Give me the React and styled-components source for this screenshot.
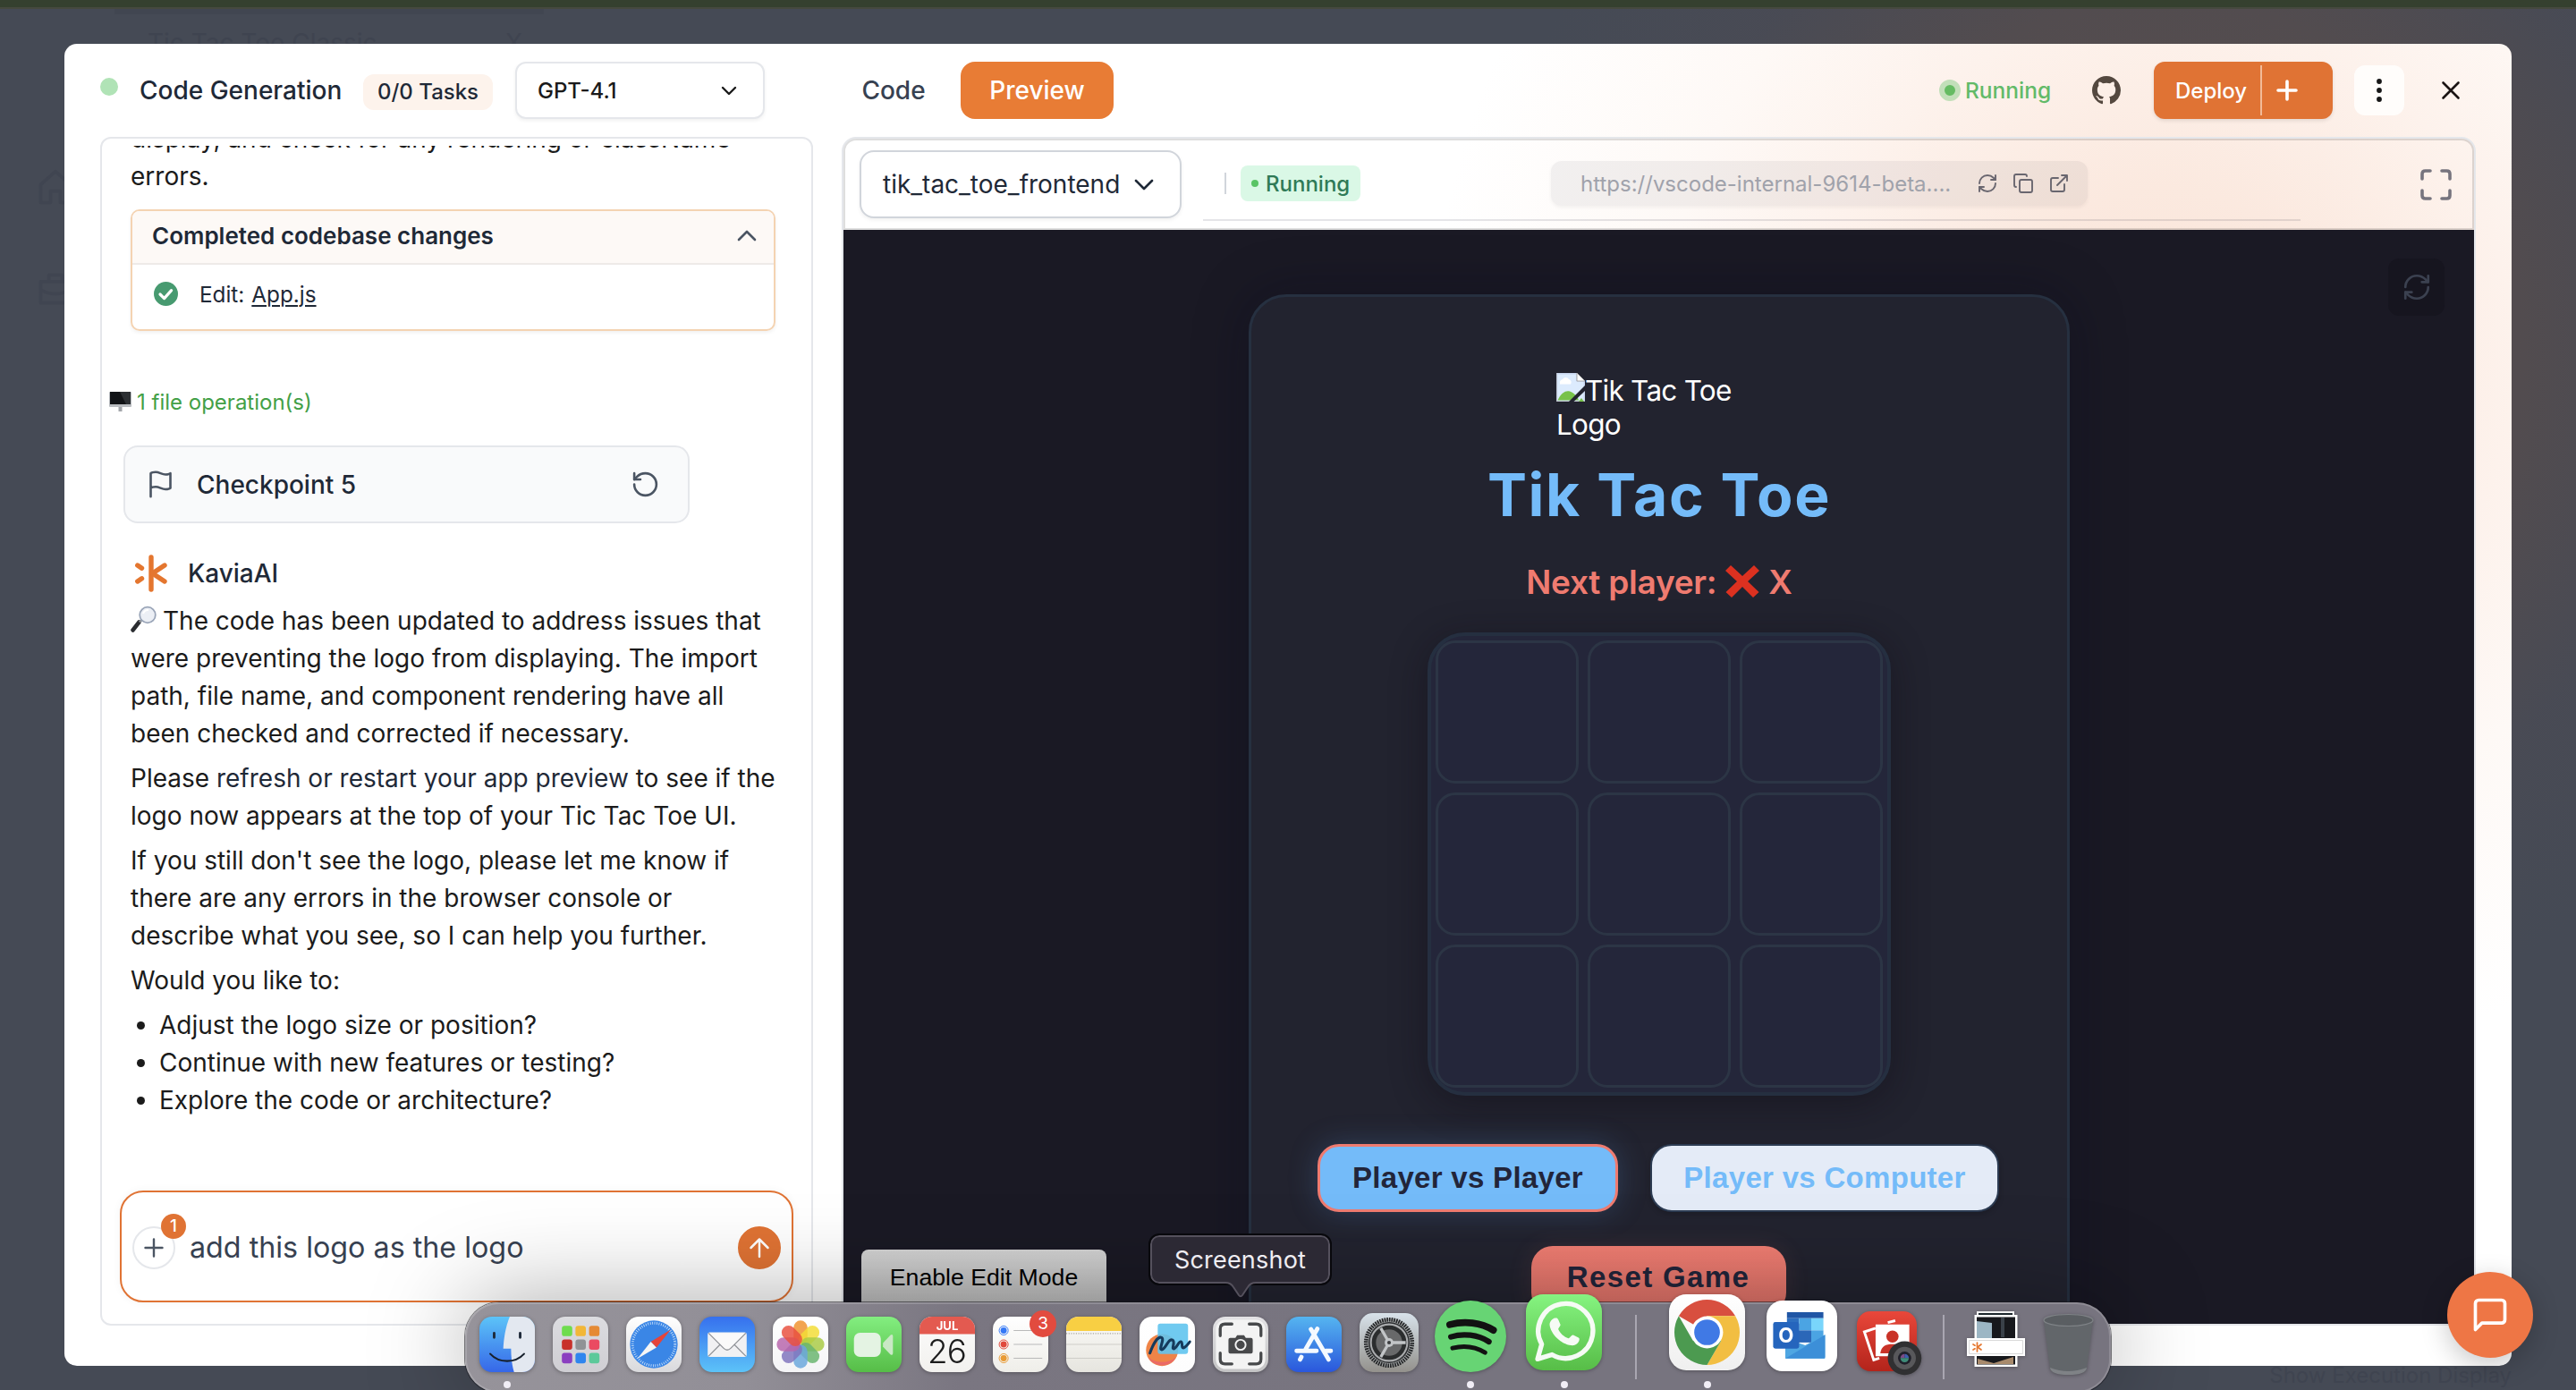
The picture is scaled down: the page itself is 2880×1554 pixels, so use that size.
import React from "react";
import styled, { createGlobalStyle } from "styled-components";

const SANS = `Inter, "Liberation Sans", sans-serif`;
const ARIAL = `"Liberation Sans", Arial, sans-serif`;

const GlobalStyle = createGlobalStyle`
  *, *::before, *::after { box-sizing: border-box; }
  body { margin: 0; background: #454a55; }
  svg { display: block; flex: none; }
`;

const Page = styled.div`
  position: relative;
  width: 2880px;
  height: 1554px;
  overflow: hidden;
  padding: 49px 72px 0;
  font-family: ${SANS};
  white-space: nowrap;
  background:
    linear-gradient(#35402f 0 8px, #46493f 8px 10px, transparent 10px),
    radial-gradient(circle 780px at 2420px 400px, #5c4e4c 0, #524c4f 400px, rgba(75, 75, 84, 0.6) 580px, rgba(69, 74, 85, 0) 780px),
    #454a55;
`;

/* ---------- dimmed page behind the dialog ---------- */

const GhostTab = styled.div`
  position: absolute;
  left: 128px;
  top: 10px;
  width: 480px;
  height: 39px;
  padding: 15px 24px 0 37px;
  display: flex;
  justify-content: space-between;
  border-top: 6px solid #414651;
  font-size: 28px;
  line-height: 34px;
  color: #3f4450;
`;

const GhostNav = styled.div`
  position: absolute;
  left: 40px;
  top: 188px;
  display: flex;
  flex-direction: column;
  gap: 70px;
  color: #404551;
`;

const GhostCaption = styled.div`
  position: absolute;
  right: 72px;
  top: 1521px;
  font-size: 24px;
  line-height: 34px;
  color: #3f4450;
`;

/* ---------- dialog ---------- */

const Dialog = styled.main`
  position: relative;
  width: 2736px;
  height: 1478px;
  padding: 0 40px;
  border-radius: 14px;
  background:
    radial-gradient(circle 820px at 2348px 351px, #fae4d8 0, #fbe9df 190px, #fdf2ec 390px, #fef9f6 560px, rgba(255, 255, 255, 0) 820px),
    #ffffff;
`;

const Header = styled.header`
  display: flex;
  align-items: center;
  height: 104px;
`;

const StatusDot = styled.span`
  width: 20px;
  height: 20px;
  margin-bottom: 8px;
  border-radius: 50%;
  background: #b0e3b6;
`;

const Title = styled.h1`
  width: 250px;
  margin: 0 0 0 24px;
  font-size: 28px;
  font-weight: 500;
  color: #1f2937;
`;

const TaskPill = styled.span`
  display: flex;
  align-items: center;
  justify-content: center;
  width: 145px;
  height: 40px;
  margin-top: 3px;
  border-radius: 12px;
  background: #fdf3ec;
  font-size: 24px;
  font-weight: 500;
  color: #1f2937;
`;

const ModelSelect = styled.div`
  display: flex;
  align-items: center;
  justify-content: space-between;
  width: 279px;
  height: 64px;
  margin-left: 25px;
  padding: 0 29px 0 23px;
  border: 2px solid #e5e7eb;
  border-radius: 12px;
  background: #fff;
  box-shadow: 0 2px 4px rgba(0, 0, 0, 0.06);
  font-size: 24px;
  color: #1a1a1a;
  font-weight: 500;
`;

const Tab = styled.span`
  display: flex;
  align-items: center;
  justify-content: center;
  width: ${(p) => p.$width}px;
  height: 64px;
  margin-left: ${(p) => p.$before}px;
  border-radius: 16px;
  background: ${(p) => (p.$active ? "#e87c35" : "transparent")};
  color: ${(p) => (p.$active ? "#fff" : "#374151")};
  font-size: 28px;
  font-weight: 500;
`;

const HeaderEnd = styled.div`
  display: flex;
  align-items: center;
  margin-left: auto;
  margin-right: 17px;
`;

const LiveDot = styled.span`
  width: 24px;
  height: 24px;
  border: 6px solid #c2dfb9;
  border-radius: 50%;
  background: #65bb62;
`;

const LiveText = styled.span`
  width: 142px;
  margin-left: 5px;
  font-size: 24.5px;
  font-weight: 500;
  color: #62ba68;
`;

const DeployButton = styled.div`
  display: flex;
  align-items: center;
  width: 200px;
  height: 64px;
  margin-left: 37px;
  padding: 0 39px 0 24px;
  border-radius: 12px;
  background: #e07334;
  box-shadow: 0 2px 4px rgba(0, 0, 0, 0.1);
  color: #fff;
  font-size: 24px;
  font-weight: 500;
`;

const DeployDivider = styled.span`
  width: 2px;
  height: 56px;
  margin: 0 16px 0 auto;
  background: #f1bb99;
`;

const MenuButton = styled.div`
  display: flex;
  align-items: center;
  justify-content: center;
  width: 56px;
  height: 56px;
  margin: 0 41px 0 24px;
  border-radius: 12px;
  background: #fffdfb;
`;

const Body = styled.div`
  display: flex;
  gap: 32px;
`;

/* ---------- chat ---------- */

const ChatPanel = styled.section`
  display: flex;
  flex-direction: column;
  width: 797px;
  height: 1329px;
  padding: 8px 0 24px;
  border: 2px solid #e5e7eb;
  border-radius: 12px;
`;

const ChatScroll = styled.div`
  flex: 1;
  min-height: 0;
  padding-left: 32px;
  overflow: hidden;
`;

const Message = styled.p`
  margin: ${(p) => p.$top || 0}px 0 0;
  font-size: 28px;
  line-height: 42px;
  color: #1b1b1b;
`;

const Emphasis = styled.span`
  color: #1f2937;
`;

const Bullets = styled.ul`
  margin: 8px 0 0;
  padding: 0;
  list-style: none;
  font-size: 28px;
  line-height: 42px;
  color: #1b1b1b;
`;

const Bullet = styled.li`
  display: flex;
  align-items: center;
  gap: 16px;
  padding-left: 7px;

  &::before {
    content: "";
    width: 9px;
    height: 9px;
    border-radius: 50%;
    background: #1b1b1b;
  }
`;

const InlineIcon = styled.span`
  display: inline-block;
  vertical-align: ${(p) => p.$drop}px;
  margin-right: ${(p) => p.$after}px;
`;

const ChangeCard = styled.div`
  width: 721px;
  height: 136px;
  margin-top: 16px;
  border: 2px solid #f4d3b2;
  border-radius: 10px;
  overflow: hidden;
  box-shadow: 0 2px 4px rgba(0, 0, 0, 0.06);
`;

const ChangeHead = styled.div`
  display: flex;
  align-items: center;
  justify-content: space-between;
  height: 60px;
  padding: 0 19px 3px 22px;
  border-bottom: 2px solid #eeeae8;
  background: #fdf9f6;
  font-size: 26px;
  font-weight: 600;
  color: #1f2937;
`;

const ChangeRow = styled.div`
  display: flex;
  align-items: center;
  height: 65px;
  padding-left: 24px;
  font-size: 24.300px;
  color: #1f2937;

  svg { margin-right: 24px; }
`;

const FileLink = styled.span`
  margin-left: 8px;
  text-decoration: underline;
  text-decoration-thickness: 2px;
  text-underline-offset: 3px;
`;

const FileOps = styled.div`
  display: flex;
  align-items: center;
  gap: 6px;
  height: 40px;
  margin: 59px 0 0 -24px;
  font-size: 24px;
  color: #43a047;
`;

const Checkpoint = styled.div`
  display: flex;
  align-items: center;
  width: 633px;
  height: 87px;
  margin: 29px 0 0 -8px;
  padding: 0 31px 0 23px;
  border: 2px solid #e5e7eb;
  border-radius: 16px;
  background: #f9fafb;
  font-size: 28px;
  font-weight: 500;
  color: #1f2937;
`;

const CheckpointName = styled.span`
  flex: 1;
  margin-left: 24px;
`;

const Author = styled.div`
  display: flex;
  align-items: center;
  gap: 20px;
  height: 48px;
  margin: 32px 0 8px 2px;
  font-size: 28px;
  font-weight: 500;
  color: #1f2937;
`;

const Composer = styled.div`
  display: flex;
  align-items: center;
  width: 753px;
  height: 125px;
  margin-left: 20px;
  padding: 2px 12px 0;
  border: 2px solid #e07334;
  border-radius: 26px;
  background: #fff;
  box-shadow: 0 0 10px rgba(0, 0, 0, 0.05);
`;

const RoundButton = styled.div`
  position: relative;
  display: flex;
  align-items: center;
  justify-content: center;
  width: 48px;
  height: 48px;
  border-radius: 50%;
  border: 2px solid ${(p) => (p.$solid ? "#e07334" : "#e5e7eb")};
  background: ${(p) => (p.$solid ? "#e07334" : "#fff")};
`;

const CountBadge = styled.span`
  position: absolute;
  right: -14px;
  top: -16px;
  width: 28px;
  height: 28px;
  border-radius: 50%;
  background: #e07334;
  color: #fff;
  font-size: 19px;
  font-weight: 500;
  line-height: 28px;
  text-align: center;
`;

const ComposerText = styled.span`
  flex: 1;
  margin-left: 16px;
  font-size: 32.250px;
  color: #374151;
`;

/* ---------- preview ---------- */

const PreviewPanel = styled.section`
  width: 1827px;
  height: 1329px;
  border: 2px solid #e5e7eb;
  border-radius: 16px 16px 0 0;
`;

const Toolbar = styled.div`
  display: flex;
  align-items: center;
  height: 102px;
  padding: 0 23px 0 16px;
  border: 2px solid rgba(0, 0, 0, 0.13);
  border-radius: 14px 14px 0 0;
`;

const AppSelect = styled.div`
  display: flex;
  align-items: center;
  justify-content: space-between;
  width: 360px;
  height: 76px;
  padding: 0 29px 0 24px;
  border: 2px solid #d1d5db;
  border-radius: 16px;
  background: #fff;
  box-shadow: 0 2px 4px rgba(0, 0, 0, 0.06);
  font-size: 28px;
  color: #1f2937;
`;

const AddressRow = styled.div`
  display: flex;
  align-items: center;
  width: 1227px;
  height: 82px;
  margin: 0 0 0 24px;
  padding-left: 24px;
  border-bottom: 2px solid rgba(20, 20, 50, 0.11);
`;

const ThinDivider = styled.span`
  width: 2px;
  height: 24px;
  background: #d1d5db;
`;

const RunningPill = styled.span`
  display: flex;
  align-items: center;
  gap: 8px;
  width: 134px;
  height: 40px;
  margin-left: 16px;
  padding-left: 12px;
  border-radius: 8px;
  background: #daf8e6;
  font-size: 24px;
  font-weight: 500;
  color: #2f7a57;

  &::before {
    content: "";
    width: 8px;
    height: 8px;
    border-radius: 50%;
    background: #5ac466;
  }
`;

const AddressBox = styled.div`
  display: flex;
  align-items: center;
  gap: 16px;
  width: 600px;
  height: 50px;
  margin-left: 213px;
  padding-left: 33px;
  border-radius: 12px;
  background: rgba(40, 30, 50, 0.06);
  box-shadow: 0 2px 4px rgba(0, 0, 0, 0.05);
  color: #69666f;
`;

const Address = styled.span`
  width: 427px;
  font-size: 24px;
  color: #a0a2ab;
`;

const FullScreen = styled.div`
  margin-left: auto;
  color: #76747e;
`;

const Frame = styled.div`
  position: relative;
  height: 1223px;
  padding: 72px 0 0 453px;
  overflow: hidden;
  background: #1a1924;
`;

const ReloadGhost = styled.div`
  position: absolute;
  right: 33px;
  top: 32px;
  display: flex;
  align-items: center;
  justify-content: center;
  width: 63px;
  height: 64px;
  border-radius: 12px;
  background: #16151f;
  color: #3b4150;
`;

const EditMode = styled.div`
  position: absolute;
  left: 20px;
  bottom: 6px;
  width: 274px;
  height: 77px;
  padding-top: 15px;
  border-radius: 8px;
  background: linear-gradient(#d2d2d2, #bcbcbc 80%);
  font-family: ${ARIAL};
  font-size: 26.67px;
  line-height: 32px;
  text-align: center;
  color: #000;
`;

const GameCard = styled.div`
  display: flex;
  flex-direction: column;
  align-items: center;
  width: 918px;
  height: 1300px;
  padding-top: 85px;
  border: 3px solid #263040;
  border-radius: 42px;
  background: #22232f;
  box-shadow: 0 0 60px rgba(10, 10, 30, 0.35);
`;

const BrokenImage = styled.div`
  width: 230px;
  height: 76px;
  font-size: 31.500px;
  line-height: 38px;
  letter-spacing: -0.750px;
  color: #fff;
`;

const GameTitle = styled.h2`
  margin: 20px 0 0;
  font-size: 66px;
  font-weight: 700;
  line-height: 80px;
  letter-spacing: 1.600px;
  color: #74bbf9;
`;

const Status = styled.div`
  display: flex;
  align-items: center;
  height: 46px;
  margin-top: 34px;
  font-size: 37px;
  font-weight: 600;
  letter-spacing: -0.250px;
  color: #ef7b70;

  svg { margin: 0 10px; }
`;

const Board = styled.div`
  display: grid;
  grid-template-columns: repeat(3, 160px);
  grid-auto-rows: 160px;
  gap: 10px;
  width: 518px;
  height: 518px;
  margin-top: 34px;
  padding: 5px;
  border: 4px solid #252f40;
  border-radius: 42px;
  background: #24263a;
  box-shadow: 0 8px 40px rgba(15, 10, 20, 0.45);
`;

const Cell = styled.div`
  border: 3px solid #2c3545;
  border-radius: 22px;
`;

const Modes = styled.div`
  display: flex;
  gap: 36px;
  margin-top: 54px;
  margin-right: 2px;
`;

const ModeButton = styled.div`
  display: flex;
  align-items: center;
  justify-content: center;
  width: ${(p) => (p.$active ? 336 : 390)}px;
  height: 76px;
  border: ${(p) => (p.$active ? "3px solid #ef7b70" : "2px solid #2c3b52")};
  border-radius: 24px;
  background: ${(p) => (p.$active ? "#74bbf9" : "#e4ebf7")};
  box-shadow: ${(p) => (p.$active ? "0 0 32px rgba(80, 130, 190, 0.3)" : "0 2px 6px rgba(0, 0, 0, 0.2)")};
  font-family: ${ARIAL};
  font-size: 33px;
  font-weight: 700;
  letter-spacing: 0.3px;
  color: ${(p) => (p.$active ? "#22253a" : "#74bbf9")};
`;

const ResetButton = styled.div`
  display: flex;
  align-items: center;
  justify-content: center;
  width: 285px;
  height: 76px;
  margin: 38px 2px 0 0;
  padding-bottom: 6px;
  border-radius: 24px;
  background: linear-gradient(#f07d72 0%, #e2746a 85%);
  box-shadow: 0 2px 28px rgba(239, 123, 112, 0.12);
  font-family: ${ARIAL};
  font-size: 33px;
  font-weight: 700;
  letter-spacing: 1.35px;
  color: #22253a;
`;

/* ---------- overlays ---------- */

const Tooltip = styled.div`
  position: absolute;
  left: 1286px;
  top: 1381px;
  width: 201px;
  height: 54px;
  border: 2px solid #55515d;
  border-radius: 10px;
  outline: 2px solid #08080c;
  background: #2c2934;
  font-size: 27px;
  line-height: 51px;
  text-align: center;
  letter-spacing: 0.2px;
  color: #efedf2;

  svg {
    position: absolute;
    left: 82px;
    top: 48px;
  }
`;

const Dock = styled.nav`
  position: absolute;
  left: 520px;
  top: 1456px;
  display: flex;
  align-items: flex-end;
  width: 1840px;
  height: 101px;
  padding: 0 16px 23px;
  border-radius: 38px;
  background: linear-gradient(90deg, #96939a 0%, #928f97 17%, #7a7681 30%, #77747f 60%, #77747f 100%);
  box-shadow: 0 0 0 1px rgba(20, 20, 25, 0.55), inset 0 0 0 2px rgba(255, 255, 255, 0.17), 0 0 110px rgba(0, 0, 0, 0.36);
`;

const DockItem = styled.div`
  position: relative;
  flex: none;
  width: ${(p) => p.$size}px;
  height: ${(p) => p.$height || p.$size}px;
  margin-left: ${(p) => (p.$before === undefined ? 20 : p.$before)}px;
  margin-bottom: ${(p) => p.$lift || 0}px;

  > svg {
    width: 100%;
    height: 100%;
    overflow: visible;
    filter: drop-shadow(0 1px 2px rgba(0, 0, 0, 0.3));
  }
`;

const RunningMark = styled.span`
  position: absolute;
  left: 50%;
  bottom: ${(p) => -18 - (p.$lift || 0)}px;
  width: 8px;
  height: 8px;
  margin-left: -4px;
  border-radius: 50%;
  background: #f1eef6;
`;

const DockBadge = styled.span`
  position: absolute;
  right: -9px;
  top: -7px;
  width: 30px;
  height: 30px;
  border-radius: 50%;
  background: #e24b3f;
  color: #fff;
  font-size: 19px;
  line-height: 30px;
  text-align: center;
`;

const DockDivider = styled.span`
  width: 2px;
  height: 72px;
  margin: 0 ${(p) => p.$after}px -8px ${(p) => p.$before}px;
  background: #a9a6b1;
`;

const ChatFab = styled.div`
  position: absolute;
  left: 2736px;
  top: 1422px;
  display: flex;
  align-items: center;
  justify-content: center;
  width: 96px;
  height: 96px;
  border-radius: 50%;
  background: #ee7645;
  box-shadow: 0 8px 30px rgba(0, 0, 0, 0.22);
`;

/* ---------- line icons ---------- */

const Line = ({ size, w = size, h = size, box = "0 0 24 24", sw = 2, color = "currentColor", children }) => (
  <svg width={w} height={h} viewBox={box} fill="none" stroke={color} strokeWidth={sw} strokeLinecap="round" strokeLinejoin="round">
    {children}
  </svg>
);

const Refresh = ({ size, sw }) => (
  <Line size={size} sw={sw}>
    <path d="M3 12a9 9 0 0 1 9-9 9.75 9.75 0 0 1 6.74 2.74L21 8" />
    <path d="M21 3v5h-5" />
    <path d="M21 12a9 9 0 0 1-9 9 9.75 9.75 0 0 1-6.74-2.74L3 16" />
    <path d="M8 16H3v5" />
  </Line>
);

const CheckCircle = () => (
  <svg width="27" height="27" viewBox="0 0 27 27">
    <circle cx="13.5" cy="13.5" r="13.5" fill="#479a70" />
    <path d="M7 14l4.6 4.6 8-9" fill="none" stroke="#fff" strokeWidth="3.2" strokeLinecap="round" strokeLinejoin="round" />
  </svg>
);

const GitHubMark = () => (
  <svg width="32" height="32" viewBox="0 0 16 16" fill="#54483f">
    <path d="M8 0C3.58 0 0 3.58 0 8c0 3.54 2.29 6.53 5.47 7.59.4.07.55-.17.55-.38 0-.19-.01-.82-.01-1.49-2.01.37-2.53-.49-2.69-.94-.09-.23-.48-.94-.82-1.13-.28-.15-.68-.52-.01-.53.63-.01 1.08.58 1.23.82.72 1.21 1.87.87 2.33.66.07-.52.28-.87.51-1.07-1.78-.2-3.64-.89-3.64-3.95 0-.87.31-1.59.82-2.15-.08-.2-.36-1.02.08-2.12 0 0 .67-.21 2.2.82.64-.18 1.32-.27 2-.27s1.36.09 2 .27c1.53-1.04 2.2-.82 2.2-.82.44 1.1.16 1.92.08 2.12.51.56.82 1.27.82 2.15 0 3.07-1.87 3.75-3.65 3.95.29.25.54.73.54 1.48 0 1.07-.01 1.93-.01 2.2 0 .21.15.46.55.38A8.01 8.01 0 0 0 16 8c0-4.42-3.58-8-8-8z" />
  </svg>
);

const KaviaMark = ({ size = 42 }) => (
  <svg width={size} height={size} viewBox="0 0 42 42" fill="none" stroke="#e4762f" strokeWidth="5.4" strokeLinecap="round">
    <path d="M21 3v36" />
    <path d="M36 12L22.500 21L36 30" strokeLinejoin="round" />
    <path d="M5.800 12l4.700 3.200M5.800 30l4.700-3.200" />
  </svg>
);

const Monitor = () => (
  <svg width="25" height="22" viewBox="0 0 25 22">
    <rect x="0" y="0" width="25" height="17" rx="1" fill="#b9bcc0" />
    <rect x="1" y="0" width="23" height="14" fill="#111316" />
    <path d="M12 0h12v14h-5z" fill="#2c2f32" />
    <path d="M10.500 17h4v5h-4z" fill="#a3a6aa" />
  </svg>
);

const Magnifier = () => (
  <svg width="30" height="30" viewBox="0 0 30 30">
    <path d="M2.500 27.500l7-9" stroke="#2a2c30" strokeWidth="4.500" strokeLinecap="round" />
    <path d="M10 18.500l3-3" stroke="#8c9096" strokeWidth="3" />
    <circle cx="19" cy="10.500" r="8.800" fill="#eceff5" stroke="#9aa5b8" strokeWidth="1.800" />
    <path d="M14 9a6 6 0 0 1 6-4" stroke="#fff" strokeWidth="2" fill="none" />
  </svg>
);

const Cross = () => (
  <svg width="38" height="38" viewBox="0 0 38 38">
    <path d="M6 1l13 12L32 1l6 6-13 12 12.500 12L31 37 19 25 7 37l-6.500-6L13 19 0 7z" fill="#dc3120" />
  </svg>
);

const BrokenPicture = () => (
  <svg width="32" height="32" viewBox="0 0 32 32">
    <path d="M0 0h23l9 9v23H0z" fill="#c9d6ee" />
    <path d="M1.500 1.500H22v8h8.500v21h-29z" fill="#dcebfd" />
    <path d="M23 0l9 9h-9z" fill="#fff" stroke="#a8a8a8" />
    <path d="M4 12a4 4 0 0 1 3-5 4 4 0 0 1 7 0 3.500 3.500 0 0 1 2 5.500H4z" fill="#fff" />
    <path d="M1.500 30.500C5 22 11 19 15 20.500c5 2 9 6 10 10z" fill="#78c24b" />
    <path d="M0 0v32h32" fill="none" stroke="#b0b0b0" />
    <path d="M32 14v6L19.500 32H14z" fill="#22232f" />
    <path d="M25 32l3-4 3 4z" fill="#78c24b" />
  </svg>
);

/* ---------- dock icons ---------- */

const Tile = ({ id, from, to, children }) => (
  <svg viewBox="0 0 64 64">
    <defs>
      <linearGradient id={id} x1="0" y1="0" x2="0" y2="1">
        <stop offset="0" stopColor={from} />
        <stop offset="1" stopColor={to} />
      </linearGradient>
      <clipPath id={`${id}-clip`}>
        <rect width="64" height="64" rx="14.500" />
      </clipPath>
    </defs>
    <rect width="64" height="64" rx="14.500" fill={`url(#${id})`} />
    {children}
  </svg>
);

const Finder = () => (
  <Tile id="finder" from="#5cc4f8" to="#3667e8">
    <path clipPath="url(#finder-clip)" d="M35 0C30 12 28 26 27.500 37h9c0 10 1 19 3.500 27h24V0z" fill="#e3e8f0" />
    <path d="M17 19v5M47 19v5" stroke="#1f2a3a" strokeWidth="3" strokeLinecap="round" />
    <path d="M12.500 43c10 11 29 11 39 0" fill="none" stroke="#17202c" strokeWidth="2.200" strokeLinecap="round" />
  </Tile>
);

const launchColors = ["#6fdc4e", "#f2b738", "#e58a35", "#c8302a", "#909396", "#ea4a62", "#8b3fc0", "#2f85ee", "#5cc99a"];
const Launchpad = () => (
  <Tile id="launch" from="#dcdce0" to="#cfced3">
    {launchColors.map((c, i) => (
      <rect key={c} x={10.500 + (i % 3) * 15.700} y={10.500 + Math.floor(i / 3) * 15.700} width="12" height="12" rx="3" fill={c} />
    ))}
  </Tile>
);

const Safari = () => (
  <Tile id="safari" from="#ffffff" to="#d9d9dc">
    <circle cx="32" cy="32" r="27.500" fill="#3a86e6" />
    <circle cx="32" cy="32" r="24.500" fill="none" stroke="#d5e8fb" strokeWidth="3" strokeDasharray="0.800 1.765" />
    <path d="M51.500 15L28.500 29l6.500 6.500z" fill="#e5443a" />
    <path d="M13 48.500L28.500 29l6.500 6.500z" fill="#f5f5f5" />
  </Tile>
);

const Mail = () => (
  <Tile id="mail" from="#3670ee" to="#5cc3f8">
    <rect x="9.500" y="18" width="45" height="28.500" rx="2.500" fill="#f1f1f3" />
    <path d="M10.500 45.500L25 31M53.500 45.500L39 31" stroke="#8f9297" strokeWidth="1.300" />
    <path d="M10.500 19L28 36.500c2.500 2.500 5.500 2.500 8 0L53.500 19" fill="#fafafa" stroke="#8f9297" strokeWidth="1.300" />
  </Tile>
);

const petals = ["#f0922f", "#f3dd36", "#a9cb45", "#69b56f", "#6aa7dc", "#8073bd", "#b765ab", "#e8503f"];
const Photos = () => (
  <Tile id="photos" from="#ffffff" to="#f4f4f6">
    {petals.map((c, i) => (
      <rect key={c} x="24" y="4.500" width="16" height="27" rx="8" fill={c} opacity="0.84" transform={`rotate(${i * 45} 32 32)`} />
    ))}
  </Tile>
);

const FaceTime = () => (
  <Tile id="facetime" from="#83ee80" to="#56bd47">
    <rect x="9" y="18.500" width="31" height="28" rx="7" fill="#e4f3e3" />
    <path d="M42.500 30.500L51 21.500q3-2 3 1.500v19q0 3.500-3 1.500l-8.500-9z" fill="#c9e8c5" />
  </Tile>
);

const Calendar = () => (
  <Tile id="calendar" from="#fcfcfc" to="#f2f1ee">
    <path clipPath="url(#calendar-clip)" d="M0 0h64v20H0z" fill="#e35a50" />
    <text x="32" y="15.500" textAnchor="middle" fontFamily={SANS} fontSize="13.500" fontWeight="700" fill="#fff">JUL</text>
    <text x="31.500" y="54" textAnchor="middle" fontFamily={SANS} fontSize="38" fontWeight="300" letterSpacing="-1" fill="#1c1c1c">26</text>
  </Tile>
);

const Reminders = () => (
  <Tile id="reminders" from="#ffffff" to="#efeee9">
    {["#3478f6", "#e0483c", "#e89a34"].map((c, i) => (
      <g key={c} transform={`translate(0 ${i * 16})`}>
        <circle cx="12.500" cy="16" r="3.600" fill={c} />
        <circle cx="12.500" cy="16" r="5.200" fill="none" stroke={c} strokeWidth="1" />
        <path d="M24 16h33" stroke="#b9b9b9" strokeWidth="1.200" />
      </g>
    ))}
  </Tile>
);

const Notes = () => (
  <Tile id="notes" from="#fbfaf7" to="#e6e5df">
    <path clipPath="url(#notes-clip)" d="M0 0h64v16.500H0z" fill="#f8cf43" />
    <path d="M0 19.500h64" stroke="#a5a39c" strokeWidth="1.500" strokeDasharray="1.200 1.600" />
    <path d="M0 32h64M0 48h64" stroke="#cfcec9" strokeWidth="1.200" />
  </Tile>
);

const Freeform = () => (
  <Tile id="freeform" from="#ffffff" to="#fdfdfd">
    <circle cx="26" cy="38.500" r="18.500" fill="#ef8447" />
    <path d="M10 47a18.500 18.500 0 0 0 32 0 26 26 0 0 1-32 0z" fill="#ea6a68" />
    <rect x="21" y="8" width="35" height="35" rx="3" fill="#60c4ee" opacity="0.9" />
    <path d="M12 42c4-11 9-19 13-18 5 1-4 15 1 14 5-2 7-13 12-11 4 2-2 11 2 10 4-2 5-9 8-8 2 1 0 8 3 7 2-1 4-3 7-7" fill="none" stroke="#153a5c" strokeWidth="3.200" strokeLinecap="round" />
  </Tile>
);

const Screenshot = () => (
  <Tile id="shot" from="#e3e2e5" to="#c3c3c4">
    <rect x="3.500" y="3.500" width="57" height="57" rx="11" fill="#f3f3f3" />
    <path d="M8.500 22V14q0-5.500 5.500-5.500h8M42 8.500h8q5.500 0 5.500 5.500v8M55.500 42v7q0 5.500-5.500 5.500h-8M22 54.500h-8q-5.500 0-5.500-5.500v-7" fill="none" stroke="#47494b" strokeWidth="3.400" strokeLinecap="round" />
    <path d="M20 24.500h6l2-3h8l2 3h6q2 0 2 2v14q0 2-2 2H20q-2 0-2-2v-14q0-2 2-2z" fill="#48494b" />
    <circle cx="32" cy="32.500" r="5.800" fill="#48494b" stroke="#f3f3f3" strokeWidth="2" />
  </Tile>
);

const AppStore = () => (
  <Tile id="appstore" from="#55b5f0" to="#2a57dc">
    <g stroke="#f4f9ff" strokeWidth="5" strokeLinecap="round">
      <path d="M36 14L22.500 37.500M28.500 14.500L49 49.500M12 39.500h23M45.500 39.500h6M17.500 46.500l-1.500 3" />
    </g>
  </Tile>
);

const Settings = () => (
  <Tile id="settings" from="#d8e2ea" to="#93918c">
    <circle cx="32" cy="32" r="26" fill="#a7aaab" />
    <circle cx="32" cy="32" r="25" fill="none" stroke="#222426" strokeWidth="4.500" strokeDasharray="1.600 1" />
    <circle cx="32" cy="32" r="21.500" fill="#a9abad" stroke="#2c2e30" strokeWidth="1.500" />
    <circle cx="32" cy="32" r="16.500" fill="#68696a" stroke="#2b2d2e" strokeWidth="4.500" />
    <path d="M32 32h18M32 32l-9-15.600M32 32l-9 15.600" stroke="#c2c5c7" strokeWidth="3.200" />
    <circle cx="32" cy="32" r="4.800" fill="#c2c5c7" />
    <circle cx="32" cy="32" r="2" fill="#3c3e40" />
  </Tile>
);

const Spotify = () => (
  <svg viewBox="0 0 64 64">
    <circle cx="32" cy="32" r="32" fill="#67d474" />
    <path d="M13.500 21.500c13-3.500 28-2 39 5" fill="none" stroke="#121212" strokeWidth="6.200" strokeLinecap="round" />
    <path d="M14.500 32.500c11-3.500 24-2 34 4.300" fill="none" stroke="#121212" strokeWidth="5" strokeLinecap="round" />
    <path d="M16 42.500c10-2.500 20-1.500 29 4" fill="none" stroke="#121212" strokeWidth="4" strokeLinecap="round" />
  </svg>
);

const WhatsApp = () => (
  <Tile id="whatsapp" from="#86f481" to="#57bd47">
    <path d="M9.800 54.500L13.300 42A23 23 0 1 1 22 50.800z" fill="none" stroke="#f6fbf5" strokeWidth="4" strokeLinejoin="round" />
    <path d="M24.500 20c1.500-.3 2.200 0 2.800 1.500l1.700 4c.5 1.200-2 3.200-1.700 4 1.700 3.500 4.800 6.300 8.500 7.500 1 .3 2.700-3.200 4-2.700l4.500 2.200c1 .5.800 1.700.3 3-1 2.500-4 3.800-6.600 3.500C29.500 42 21 33.500 20 26c-.4-2.700 2.300-5.700 4.500-6z" fill="#f6fbf5" />
  </Tile>
);

const Chrome = () => (
  <Tile id="chrome" from="#ffffff" to="#efefef">
    <path d="M32 32L8.200 18.250A27.500 27.500 0 0 1 55.800 18.250H32z" fill="#d84f3f" />
    <path d="M32 18.250h23.800A27.500 27.500 0 0 1 32 59.500L43.900 38.900z" fill="#f2be42" />
    <path d="M20.100 38.900L8.200 18.250A27.500 27.500 0 0 0 32 59.500l11.900-20.600z" fill="#4c9a50" />
    <circle cx="32" cy="32" r="13.500" fill="#fff" />
    <circle cx="32" cy="32" r="10.800" fill="#4079e5" />
  </Tile>
);

const Outlook = () => (
  <Tile id="outlook" from="#ffffff" to="#ffffff">
    <path d="M18.500 10.500h33V16h-33z" fill="#2056a5" />
    <path d="M18.500 16h11v11h-11z" fill="#2d6fc0" />
    <path d="M29.500 16h11v11h-11z" fill="#4ba4e3" />
    <path d="M40.500 16h11v11h-11z" fill="#79d5fb" />
    <path d="M18.500 27h22v11h-22z" fill="#2b67b8" />
    <path d="M40.500 27h11v11h-11z" fill="#4ba4e3" />
    <path d="M17 52.500V34l18 6.500L53 31v21.500z" fill="#4fa6e2" />
    <path d="M17 52.500L53 31v20q0 1.500-1.500 1.500z" fill="#3c8fd8" />
    <rect x="6" y="19.500" width="23.500" height="24" rx="2" fill="#2565bd" />
    <text x="17.700" y="38" textAnchor="middle" fontFamily={SANS} fontSize="18" fontWeight="700" fill="#fff">O</text>
  </Tile>
);

const PhotoBooth = () => (
  <Tile id="booth" from="#e9473a" to="#b3241b">
    <path d="M20 18L8 22l10 30 6-2M33 12l8-2" fill="none" stroke="#fff" strokeWidth="2.800" />
    <path d="M20 14h36v34H20z" fill="#fff" />
    <circle cx="38" cy="27" r="6.500" fill="#c93328" />
    <path d="M25 45c1-8 6-10 13-10s12 2 13 10z" fill="#c93328" />
    <circle cx="51" cy="50" r="18" fill="#303032" />
    <circle cx="51" cy="50" r="12" fill="#58585b" />
    <circle cx="51" cy="50" r="7" fill="#1f1f2a" />
    <path d="M46.500 50a4.500 4.500 0 0 1 4.500-4.500V50z" fill="#7b4b86" />
    <path d="M51 45.500a4.500 4.500 0 0 1 4.500 4.500H51z" fill="#3f5fae" />
    <path d="M46.500 50a4.500 4.500 0 0 0 9 0z" fill="#3e8b78" />
  </Tile>
);

const FileStack = () => (
  <svg viewBox="0 0 65 62">
    <path d="M11 0h42v8H11z" fill="#f3f3f3" />
    <path d="M13 2h38v3H13z" fill="#1c262c" />
    <path d="M8.500 4h48v58h-48z" fill="#fff" />
    <path d="M11 6.500h43v53H11z" fill="#17181c" />
    <path d="M11 11l17 2v17H11z" fill="#9cb6c4" />
    <path d="M38 7l4 0v22h-4z" fill="#3a4149" />
    <path d="M12 53l18 5 22-7v8H12z" fill="#a88a6c" />
    <path d="M0 30h65v20H0z" fill="#fff" />
    <path d="M2.500 32.500h60v15h-60z" fill="none" stroke="#d9d9d9" />
    <g stroke="#e4762f" strokeWidth="1.700" strokeLinecap="round">
      <path d="M11.500 35v10M16 37l-4 3 4 3M7 37l2 1.200M7 43l2-1.200" fill="none" />
    </g>
  </svg>
);

const Trash = () => (
  <svg viewBox="0 0 55 69">
    <path d="M0 7l7 54q1 7 20.500 7T48 61l7-54z" fill="#62666a" />
    <ellipse cx="27.500" cy="7" rx="27.500" ry="6.500" fill="#5a5e62" stroke="#7f8387" strokeWidth="1.200" />
    <path d="M7 60q20 8 41 0-1 8-20.500 8T7 60z" fill="#8b8f93" opacity="0.700" />
  </svg>
);

export default function App() {
  return (
    <>
      <GlobalStyle />
      <Page>
        <GhostTab>
          <span>Tic Tac Toe Classic</span>
          <span>X</span>
        </GhostTab>
        <GhostNav>
          <Line size={44}>
            <path d="M3 10l9-8 9 8v11h-6v-7H9v7H3z" />
          </Line>
          <Line size={44}>
            <path d="M8 7V3h8v4M3 7h18v13H3zM3 12q9 5 18 0" />
          </Line>
        </GhostNav>
        <GhostCaption>Show Execution Display</GhostCaption>

        <Dialog>
          <Header>
            <StatusDot />
            <Title>Code Generation</Title>
            <TaskPill>0/0 Tasks</TaskPill>
            <ModelSelect>
              GPT-4.1
              <Line w={18} h={11} box="0 0 18 11" sw={2.4}>
                <path d="M2 2l7 7 7-7" />
              </Line>
            </ModelSelect>
            <Tab $width={72} $before={108}>Code</Tab>
            <Tab $width={171} $before={39} $active>Preview</Tab>
            <HeaderEnd>
              <LiveDot />
              <LiveText>Running</LiveText>
              <GitHubMark />
              <DeployButton>
                Deploy
                <DeployDivider />
                <Line w={24} h={24} sw={3.6}>
                  <path d="M12 2v20M2 12h20" />
                </Line>
              </DeployButton>
              <MenuButton>
                <svg width="6" height="26" viewBox="0 0 6 26" fill="#161616">
                  <circle cx="3" cy="3" r="2.900" />
                  <circle cx="3" cy="13" r="2.900" />
                  <circle cx="3" cy="23" r="2.900" />
                </svg>
              </MenuButton>
              <Line w={22} h={22} box="0 0 22 22" sw={2.6} color="#1b1413">
                <path d="M2.500 2.500l17 17M19.500 2.500l-17 17" />
              </Line>
            </HeaderEnd>
          </Header>

          <Body>
            <ChatPanel>
              <ChatScroll>
                <Message $top={-29}>
                  display, and check for any rendering or className
                  <br />
                  errors.
                </Message>
                <ChangeCard>
                  <ChangeHead>
                    Completed codebase changes
                    <Line w={22} h={13} box="0 0 22 13" sw={2.6} color="#4b5563">
                      <path d="M2 11l9-9 9 9" />
                    </Line>
                  </ChangeHead>
                  <ChangeRow>
                    <CheckCircle />
                    Edit: <FileLink>App.js</FileLink>
                  </ChangeRow>
                </ChangeCard>
                <FileOps>
                  <Monitor />
                  1 file operation(s)
                </FileOps>
                <Checkpoint>
                  <Line w={33} h={33} sw={1.9} color="#4b5563">
                    <path d="M4 15s1-1 4-1 5 2 8 2 4-1 4-1V3s-1 1-4 1-5-2-8-2-4 1-4 1zM4 22v-7" />
                  </Line>
                  <CheckpointName>Checkpoint 5</CheckpointName>
                  <Line w={33} h={33} sw={1.9} color="#4b5563">
                    <path d="M3 12a9 9 0 1 0 9-9 9.750 9.750 0 0 0-6.740 2.740L3 8" />
                    <path d="M3 3v5h5" />
                  </Line>
                </Checkpoint>
                <Author>
                  <KaviaMark />
                  KaviaAI
                </Author>
                <Message>
                  <InlineIcon $drop={-3} $after={6}><Magnifier /></InlineIcon>
                  The code has been updated to address issues that
                  <br />
                  were preventing the logo from displaying. The import
                  <br />
                  path, file name, and component rendering have all
                  <br />
                  been checked and corrected if necessary.
                </Message>
                <Message $top={8}>
                  Please <Emphasis>refresh or restart your app preview</Emphasis> to see if the
                  <br />
                  logo now appears at the top of your Tic Tac Toe UI.
                </Message>
                <Message $top={8}>
                  If you still don't see the logo, please let me know if
                  <br />
                  there are any errors in the browser console or
                  <br />
                  describe what you see, so I can help you further.
                </Message>
                <Message $top={8}>Would you like to:</Message>
                <Bullets>
                  <Bullet>Adjust the logo size or position?</Bullet>
                  <Bullet>Continue with new features or testing?</Bullet>
                  <Bullet>Explore the code or architecture?</Bullet>
                </Bullets>
              </ChatScroll>
              <Composer>
                <RoundButton>
                  <Line w={22} h={22} box="0 0 22 22" sw={2.400} color="#4b5563">
                    <path d="M11 1.500v19M1.500 11h19" />
                  </Line>
                  <CountBadge>1</CountBadge>
                </RoundButton>
                <ComposerText>add this logo as the logo</ComposerText>
                <RoundButton $solid>
                  <Line w={24} h={24} box="0 0 24 24" sw={2.500} color="#fff">
                    <path d="M12 22V2.500M2.500 12L12 2.500l9.500 9.500" />
                  </Line>
                </RoundButton>
              </Composer>
            </ChatPanel>

            <PreviewPanel>
              <Toolbar>
                <AppSelect>
                  tik_tac_toe_frontend
                  <Line w={22} h={13} box="0 0 22 13" sw={2.600}>
                    <path d="M2 2l9 9 9-9" />
                  </Line>
                </AppSelect>
                <AddressRow>
                  <ThinDivider />
                  <RunningPill>Running</RunningPill>
                  <AddressBox>
                    <Address>https://vscode-internal-9614-beta....</Address>
                    <Refresh size={24} sw={1.900} />
                    <Line size={24} sw={1.900}>
                      <rect x="8" y="8" width="14" height="14" rx="2" />
                      <path d="M4 16c-1.100 0-2-.9-2-2V4c0-1.100.9-2 2-2h10c1.100 0 2 .9 2 2" />
                    </Line>
                    <Line size={24} sw={1.900}>
                      <path d="M15 3h6v6M10 14L21 3M18 13v6a2 2 0 0 1-2 2H5a2 2 0 0 1-2-2V8a2 2 0 0 1 2-2h6" />
                    </Line>
                  </AddressBox>
                </AddressRow>
                <FullScreen>
                  <Line w={35} h={35} box="0 0 35 35" sw={3.600}>
                    <path d="M2 11V5.500Q2 2 5.500 2H11M24 2h5.500Q33 2 33 5.500V11M33 24v5.500Q33 33 29.500 33H24M11 33H5.500Q2 33 2 29.500V24" />
                  </Line>
                </FullScreen>
              </Toolbar>
              <Frame>
                <GameCard>
                  <BrokenImage>
                    <InlineIcon $drop={-1} $after={0}><BrokenPicture /></InlineIcon>
                    Tik Tac Toe
                    <br />
                    Logo
                  </BrokenImage>
                  <GameTitle>Tik Tac Toe</GameTitle>
                  <Status>
                    Next player:
                    <Cross />
                    X
                  </Status>
                  <Board>
                    {Array.from({ length: 9 }, (_, i) => (
                      <Cell key={i} />
                    ))}
                  </Board>
                  <Modes>
                    <ModeButton $active>Player vs Player</ModeButton>
                    <ModeButton>Player vs Computer</ModeButton>
                  </Modes>
                  <ResetButton>Reset Game</ResetButton>
                </GameCard>
                <ReloadGhost>
                  <Refresh size={34} sw={1.900} />
                </ReloadGhost>
                <EditMode>Enable Edit Mode</EditMode>
              </Frame>
            </PreviewPanel>
          </Body>
        </Dialog>

        <Dock>
          <DockItem $size={62} $before={0}><Finder /><RunningMark /></DockItem>
          <DockItem $size={62}><Launchpad /></DockItem>
          <DockItem $size={62}><Safari /></DockItem>
          <DockItem $size={62}><Mail /></DockItem>
          <DockItem $size={62}><Photos /></DockItem>
          <DockItem $size={62}><FaceTime /></DockItem>
          <DockItem $size={62}><Calendar /></DockItem>
          <DockItem $size={62}><Reminders /><DockBadge>3</DockBadge></DockItem>
          <DockItem $size={62}><Notes /></DockItem>
          <DockItem $size={62}><Freeform /></DockItem>
          <DockItem $size={62}><Screenshot /></DockItem>
          <DockItem $size={62}><AppStore /></DockItem>
          <DockItem $size={66}><Settings /></DockItem>
          <DockItem $size={80} $before={18}><Spotify /><RunningMark /></DockItem>
          <DockItem $size={85} $before={22} $lift={2}><WhatsApp /><RunningMark $lift={2} /></DockItem>
          <DockDivider $before={37} $after={36} />
          <DockItem $size={85} $before={0} $lift={2}><Chrome /><RunningMark $lift={2} /></DockItem>
          <DockItem $size={79} $before={24} $lift={1}><Outlook /></DockItem>
          <DockItem $size={67} $before={22} $lift={1}><PhotoBooth /></DockItem>
          <DockDivider $before={29} $after={25} />
          <DockItem $size={65} $height={62} $before={0} $lift={6}><FileStack /></DockItem>
          <DockItem $size={55} $height={69} $before={21} $lift={-4}><Trash /></DockItem>
        </Dock>

        <Tooltip>
          Screenshot
          <svg width="34" height="20" viewBox="0 0 34 20">
            <path d="M0 3q6 0 9 5l6 9q2 2.500 4 0l6-9q3-5 9-5V0H0z" fill="#2c2934" />
            <path d="M0 3q6 0 9 5l6 9q2 2.500 4 0l6-9q3-5 9-5" fill="none" stroke="#55515d" strokeWidth="2" />
          </svg>
        </Tooltip>

        <ChatFab>
          <Line size={44} sw={2} color="#fff">
            <path d="M21 15a2 2 0 0 1-2 2H7l-4 4V5a2 2 0 0 1 2-2h14a2 2 0 0 1 2 2z" />
          </Line>
        </ChatFab>
      </Page>
    </>
  );
}
